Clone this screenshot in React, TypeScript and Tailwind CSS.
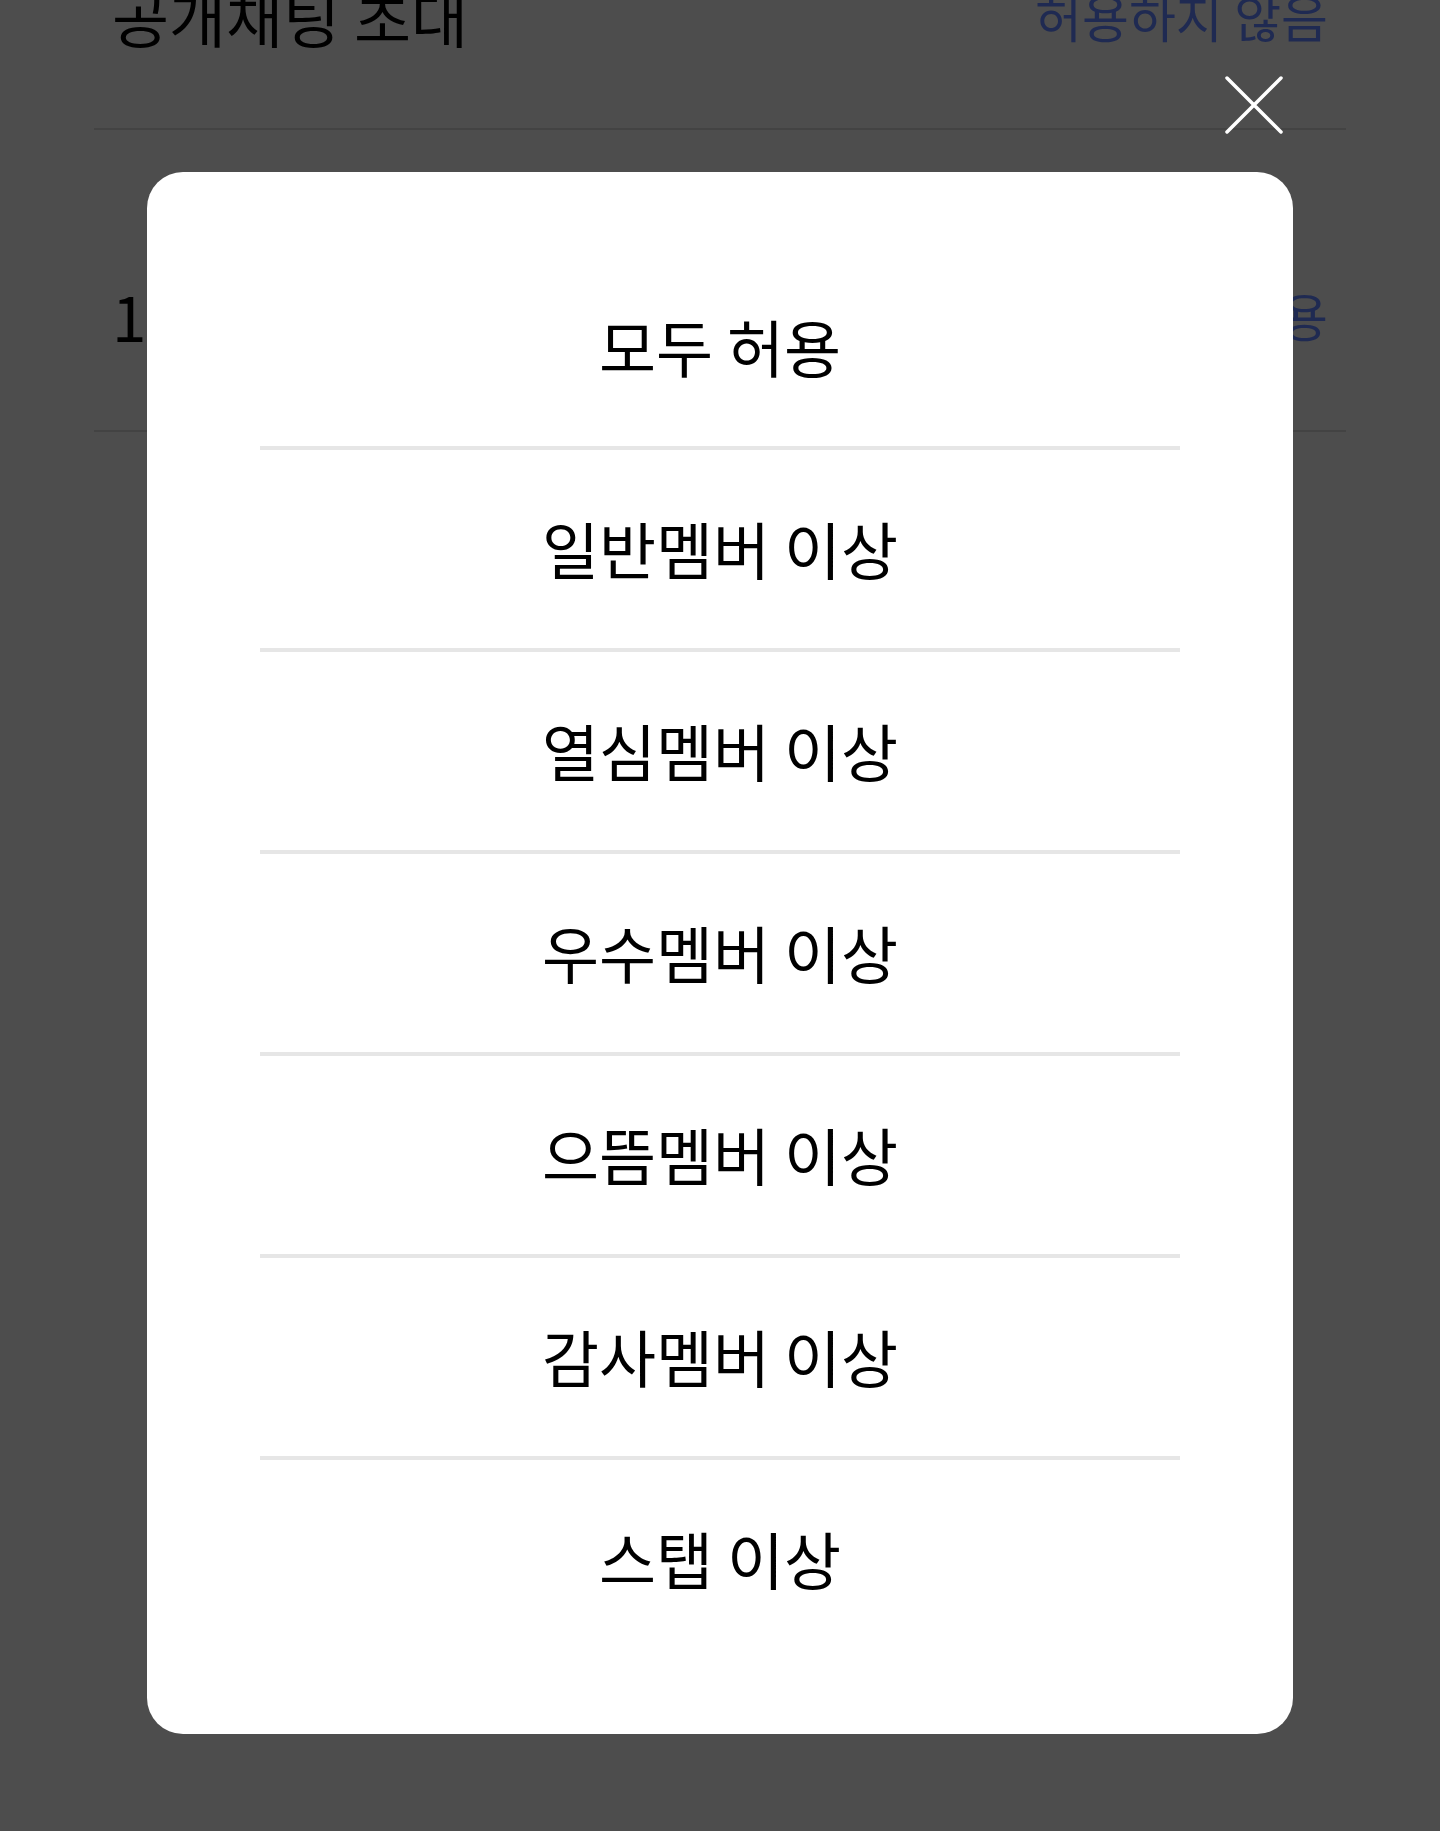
import React from "react";

const options = [
  "모두 허용",
  "일반멤버 이상",
  "열심멤버 이상",
  "우수멤버 이상",
  "으뜸멤버 이상",
  "감사멤버 이상",
  "스탭 이상",
];

export default function App() {
  return (
    <div
      className="relative h-[1831px] w-full overflow-hidden bg-[#4d4d4d]"
      style={{ fontFamily: '"Noto Sans CJK KR", "Noto Sans", sans-serif' }}
    >
      {/* underlying (dimmed) settings page */}
      <div className="mx-[94px]">
        <div className="-mt-[96px] flex h-[226px] items-center justify-between border-b-2 border-[#434343] px-[18px]">
          <span className="text-[62px] leading-none text-black">공개채팅 초대</span>
          <span className="text-[51px] leading-none text-[#1f2a52]">허용하지 않음</span>
        </div>
        <div className="flex h-[302px] items-center justify-between border-b-2 border-[#434343] px-[18px] pt-[70px]">
          <span className="text-[62px] leading-none text-black">1:1 채팅</span>
          <span className="text-[51px] leading-none text-[#1f2a52]">모두 허용</span>
        </div>
      </div>

      {/* close button */}
      <button className="absolute left-[1224px] top-[75px] h-[60px] w-[60px]" aria-label="닫기">
        <svg viewBox="0 0 60 60" className="h-[60px] w-[60px]">
          <path d="M3 3 L57 57 M57 3 L3 57" stroke="#ffffff" strokeWidth="3.5" strokeLinecap="round" fill="none" />
        </svg>
      </button>

      {/* modal */}
      <div className="absolute left-[147px] top-[172px] w-[1146px] rounded-[36px] bg-white px-[113px] py-[76px]">
        <ul className="flex flex-col">
          {options.map((o, i) =>
            i < options.length - 1 ? (
              <li
                key={o}
                className="flex h-[202px] items-center justify-center border-b-4 border-[#e6e6e6] pb-[3px] text-[62px] leading-none text-black"
              >
                {o}
              </li>
            ) : (
              <li
                key={o}
                className="flex h-[198px] items-center justify-center pb-[3px] text-[62px] leading-none text-black"
              >
                {o}
              </li>
            )
          )}
        </ul>
      </div>
    </div>
  );
}
